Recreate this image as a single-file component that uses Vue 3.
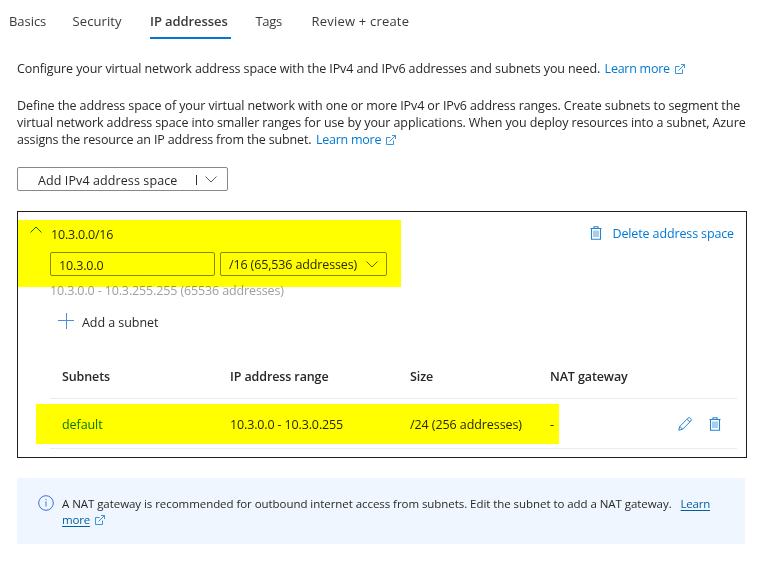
<script setup>
import { h } from 'vue'

const tabs = [
  { label: 'Basics', cls: 'basics' },
  { label: 'Security', cls: 'security' },
  { label: 'IP addresses', cls: 'ip', active: true },
  { label: 'Tags', cls: 'tags' },
  { label: 'Review + create', cls: 'review' },
]

const External = () =>
  h('svg', { viewBox: '0 0 10 10', width: 10, height: 10, class: 'ext' }, [
    h('path', { d: 'M4.5 2.5H.5v7h7V5.5M3.5 6.5l6-6M6 .5h3.5v3.5' }),
  ])

const Trash = () =>
  h('svg', { viewBox: '0 0 12 14', width: 12, height: 14, class: 'trash' }, [
    h('path', { d: 'M.5 2.5h11M4 2.3V.8h4v1.5M1.5 2.5v10.8h9V2.5' }),
    h('path', { d: 'M4 4.5v6.5M6 4.5v6.5M8 4.5v6.5', class: 'bars' }),
  ])
</script>

<template>
  <div class="page">
    <nav class="tabs">
      <a v-for="t in tabs" :key="t.label" :class="['tab', t.cls, { active: t.active }]"><span>{{ t.label }}</span></a>
    </nav>

    <p class="intro"><span class="l1">Configure your virtual network address space with the IPv4 and IPv6 addresses and subnets you need.</span><a class="learn">Learn more</a><External /></p>
    <div class="desc">
      <p><span class="l2">Define the address space of your virtual network with one or more IPv4 or IPv6 address ranges. Create subnets to segment the</span></p>
      <p><span class="l3">virtual network address space into smaller ranges for use by your applications. When you deploy resources into a subnet, Azure</span></p>
      <p><span class="l4">assigns the resource an IP address from the subnet.</span><a class="learn">Learn more</a><External /></p>
    </div>

    <button class="add-space">
      <span class="add-label">Add IPv4 address space</span>
      <i class="sep"></i>
      <svg class="chev" width="12" height="7" viewBox="0 0 12 7"><path d="M.5 .5L6 6L11.5 .5" /></svg>
    </button>

    <section class="space">
      <header class="space-head">
        <svg class="chev up" width="12" height="7" viewBox="0 0 12 7"><path d="M.5 6.5L6 1L11.5 6.5" /></svg>
        <span class="cidr">10.3.0.0/16</span>
        <a class="delete"><Trash /><span>Delete address space</span></a>
      </header>
      <div class="fields">
        <div class="field address"><span>10.3.0.0</span></div>
        <div class="field size">
          <span>/16 (65,536 addresses)</span>
          <svg class="chev" width="12" height="7" viewBox="0 0 12 7"><path d="M.5 .5L6 6L11.5 .5" /></svg>
        </div>
      </div>
      <div class="range"><span>10.3.0.0 - 10.3.255.255 (65536 addresses)</span></div>
      <a class="add-subnet">
        <svg width="16" height="16" viewBox="0 0 16 16"><path d="M0 7.5h16M8.5 0v16" /></svg>
        <span>Add a subnet</span>
      </a>
      <div class="table">
        <div class="row head">
          <span>Subnets</span><span>IP address range</span><span>Size</span><span>NAT gateway</span>
        </div>
        <div class="row">
          <span class="name">default</span><span class="ips">10.3.0.0 - 10.3.0.255</span><span>/24 (256 addresses)</span><span>-</span>
          <div class="actions">
            <svg class="pencil" width="14" height="14" viewBox="0 0 14 14"><path d="M.8 13.2L1.8 9.4L10.1 1.1Q11.4 .2 12.6 1.4Q13.8 2.6 12.9 3.9L4.6 12.2ZM9 2.2L11.8 5M1.8 9.4L4.6 12.2" /></svg>
            <Trash />
          </div>
        </div>
      </div>
      <div class="mark mark-space"></div>
      <div class="mark mark-subnet"></div>
    </section>

    <aside class="info">
      <svg class="info-icon" width="16" height="16" viewBox="0 0 16 16"><circle cx="8" cy="8" r="7.3" /><path d="M8 6.5v5M8 4v1.2" /></svg>
      <div class="info-text">
        <p><span class="i1">A NAT gateway is recommended for outbound internet access from subnets. Edit the subnet to add a NAT gateway.</span><a class="u ul">Learn</a></p>
        <p><a class="u more">more</a><External /></p>
      </div>
    </aside>
  </div>
</template>

<style>
body { background: #fff; overflow: hidden; }
</style>

<style scoped>
.page {
  box-sizing: border-box;
  width: 773px;
  height: 582px;
  font-family: "Open Sans", "Noto Sans", sans-serif;
  font-size: 12.5px;
  line-height: 17px;
  color: #292827;
  background: #fff;
  white-space: nowrap;
}
p { margin: 0; display: flex; align-items: center; height: 17px; }
svg { display: block; flex: none; fill: none; overflow: visible; }
.tabs { display: flex; height: 39px; padding-left: 9px; color: #3b3a39; font-size: 13px; }
.tab { box-sizing: border-box; padding-top: 13px; height: 39px; }
.basics { width: 63.5px; letter-spacing: -.05px; }
.security { width: 77.5px; letter-spacing: .1px; }
.ip { width: 81px; margin-right: 24.5px; letter-spacing: -.08px; }
.tags { width: 56px; letter-spacing: -.3px; }
.review { letter-spacing: .2px; }
.active { font-weight: 600; border-bottom: 2px solid #0078d4; }
.intro { margin: 21px 0 0 17px; }
.desc { margin: 20px 0 0 17px; }
.l1 { letter-spacing: -.11px; }
.l2, .l3 { letter-spacing: -.105px; }
.l4 { letter-spacing: -.15px; }
.learn { color: #0078d4; margin: 0 5px 0 4.5px; letter-spacing: -.25px; }
.ext { stroke: #2f91dc; stroke-width: .95; }
.add-space {
  box-sizing: border-box;
  display: flex;
  align-items: center;
  width: 211px;
  height: 24px;
  margin: 19px 0 0 17px;
  padding: 1px 10px 0 20px;
  border: 1px solid #8a8886;
  border-radius: 2px;
  background: #fff;
  font: inherit;
  font-weight: 500;
  letter-spacing: .1px;
  color: #292827;
}
.add-label { padding-top: 1px; }
.sep { width: 1px; height: 10px; margin-left: auto; margin-right: 8px; background: #323130; }
.chev { stroke: #605e5c; stroke-width: 1; }
.space {
  position: relative;
  box-sizing: border-box;
  width: 730px;
  height: 247px;
  margin: 20px 0 0 17px;
  border: 1px solid #201f1e;
}
.space-head { display: flex; align-items: center; height: 18px; padding: 12px 12px 0 12px; }
.up { stroke: #0078d4; margin-bottom: 7px; }
.cidr { margin-left: 9px; padding-top: 2px; letter-spacing: -.2px; }
.delete { display: flex; align-items: center; gap: 11px; margin-left: auto; color: #0078d4; letter-spacing: -.13px; }
.trash { stroke: #2484d2; stroke-width: 1.1; }
.trash :deep(.bars) { stroke-width: .8; }
.fields { display: flex; gap: 5px; margin: 10px 0 0 32px; letter-spacing: -.13px; }
.field { box-sizing: border-box; display: flex; align-items: center; height: 24px; border: 1px solid #8a8886; border-radius: 2px; }
.address { width: 165px; padding: 3px 0 0 8px; }
.size { width: 167px; padding: 1px 8px 0 8px; justify-content: space-between; }
.range { margin: 6px 0 0 32px; color: #a19f9d; letter-spacing: -.13px; }
.add-subnet { display: flex; align-items: center; gap: 8px; height: 18px; margin: 14px 0 0 40px; letter-spacing: -.05px; }
.add-subnet svg { stroke: #4a8de0; stroke-width: 1; margin-top: -2px; }
.table { margin: 23px 9px 0 32px; }
.row {
  box-sizing: border-box;
  display: grid;
  grid-template-columns: 168px 180px 140px 1fr auto;
  align-items: center;
  height: 50px;
  padding: 2px 16px 0 12px;
  border-bottom: 1px solid #edebe9;
  letter-spacing: -.08px;
}
.head { height: 45px; padding-top: 0; font-weight: 600; letter-spacing: -.11px; }
.name { color: #0078d4; }
.ips { letter-spacing: -.14px; }
.actions { display: flex; align-items: center; gap: 17px; margin-top: -2px; }
.pencil { stroke: #2484d2; stroke-width: 1; }
.mark { position: absolute; background: #ff0; mix-blend-mode: multiply; }
.mark-space { left: 0; top: 8px; width: 383px; height: 67px; }
.mark-subnet { left: 18px; top: 192px; width: 523px; height: 40px; }
.info {
  box-sizing: border-box;
  display: flex;
  width: 728px;
  height: 66px;
  margin: 20px 0 0 17px;
  padding: 17px 0 0 21px;
  background: #eff6ff;
  font-size: 11.5px;
  line-height: 16px;
}
.info p { height: 16px; }
.info-icon { stroke: #3c6fe0; stroke-width: 1; }
.info-text { margin-left: 8px; padding-top: 1px; letter-spacing: -.055px; }
.u { color: #00609f; text-decoration: underline; margin-right: 5px; text-underline-offset: 2px; }
.more { letter-spacing: -.2px; }
.ul { margin-left: 9px; letter-spacing: -.25px; }
</style>
